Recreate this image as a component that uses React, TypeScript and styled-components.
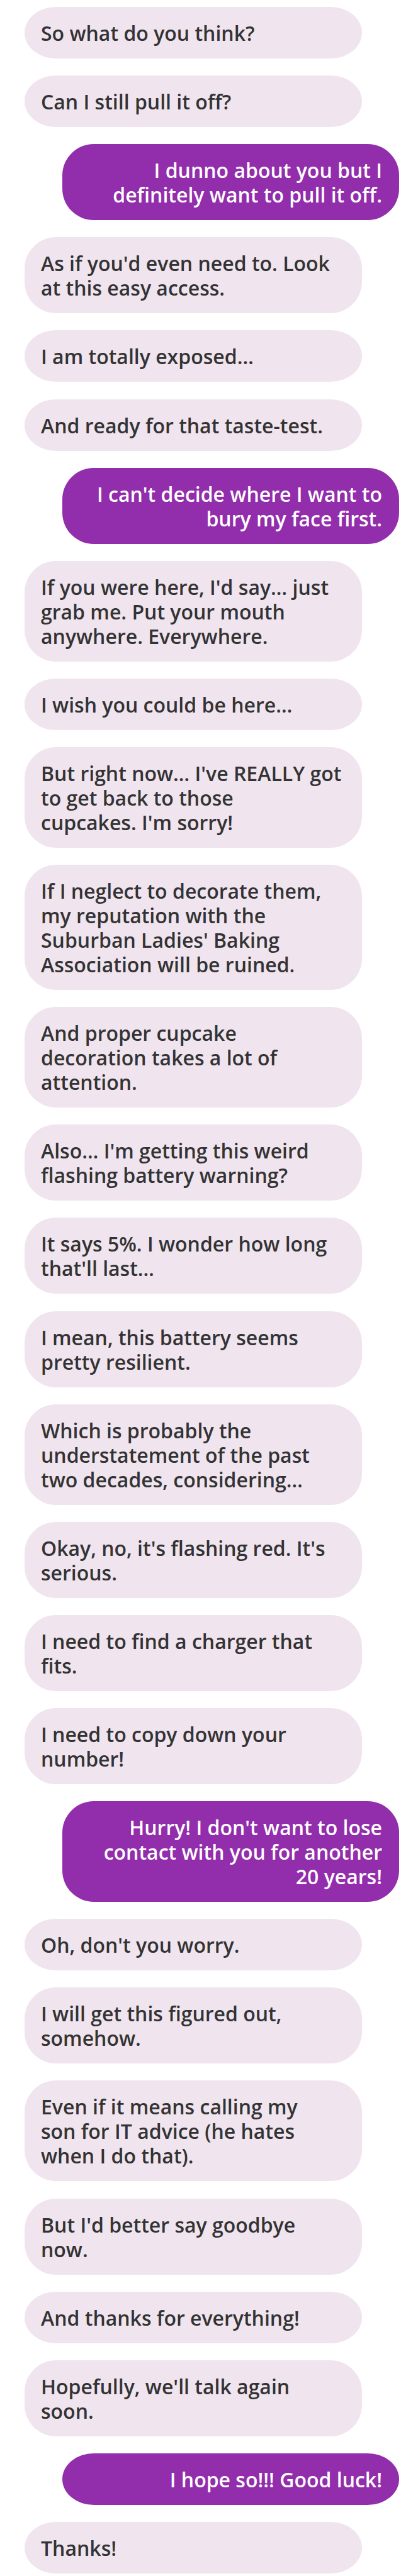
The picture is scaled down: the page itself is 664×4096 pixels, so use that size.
import React from "react";
import styled, { createGlobalStyle } from "styled-components";

type Sender = "them" | "me";

interface Message {
  from: Sender;
  lines: string[];
}

const messages: Message[] = [
  { from: "them", lines: ["So what do you think?"] },
  { from: "them", lines: ["Can I still pull it off?"] },
  { from: "me", lines: ["I dunno about you but I", "definitely want to pull it off."] },
  { from: "them", lines: ["As if you'd even need to. Look", "at this easy access."] },
  { from: "them", lines: ["I am totally exposed…"] },
  { from: "them", lines: ["And ready for that taste-test."] },
  { from: "me", lines: ["I can't decide where I want to", "bury my face first."] },
  { from: "them", lines: ["If you were here, I'd say… just", "grab me. Put your mouth", "anywhere. Everywhere."] },
  { from: "them", lines: ["I wish you could be here…"] },
  { from: "them", lines: ["But right now… I've REALLY got", "to get back to those", "cupcakes. I'm sorry!"] },
  {
    from: "them",
    lines: ["If I neglect to decorate them,", "my reputation with the", "Suburban Ladies' Baking", "Association will be ruined."],
  },
  { from: "them", lines: ["And proper cupcake", "decoration takes a lot of", "attention."] },
  { from: "them", lines: ["Also… I'm getting this weird", "flashing battery warning?"] },
  { from: "them", lines: ["It says 5%. I wonder how long", "that'll last…"] },
  { from: "them", lines: ["I mean, this battery seems", "pretty resilient."] },
  { from: "them", lines: ["Which is probably the", "understatement of the past", "two decades, considering…"] },
  { from: "them", lines: ["Okay, no, it's flashing red. It's", "serious."] },
  { from: "them", lines: ["I need to find a charger that", "fits."] },
  { from: "them", lines: ["I need to copy down your", "number!"] },
  { from: "me", lines: ["Hurry! I don't want to lose", "contact with you for another", "20 years!"] },
  { from: "them", lines: ["Oh, don't you worry."] },
  { from: "them", lines: ["I will get this figured out,", "somehow."] },
  { from: "them", lines: ["Even if it means calling my", "son for IT advice (he hates", "when I do that)."] },
  { from: "them", lines: ["But I'd better say goodbye", "now."] },
  { from: "them", lines: ["And thanks for everything!"] },
  { from: "them", lines: ["Hopefully, we'll talk again", "soon."] },
  { from: "me", lines: ["I hope so!!! Good luck!"] },
  { from: "them", lines: ["Thanks!"] },
];

const GlobalStyle = createGlobalStyle`
  * {
    box-sizing: border-box;
  }
  body {
    margin: 0;
    background: #ffffff;
  }
`;

const Thread = styled.ol`
  display: flex;
  flex-direction: column;
  justify-content: space-between;
  gap: 27px;
  min-height: 100vh;
  margin: 0;
  padding: 11px 30px 4px 39px;
  list-style: none;
  font-family: "Open Sans", "Liberation Sans", sans-serif;
  font-size: 32px;
  font-weight: 600;
  line-height: 39px;
`;

const Bubble = styled.li<{ $from: Sender }>`
  align-self: ${({ $from }) => ($from === "me" ? "flex-end" : "flex-start")};
  width: 90%;
  padding: 22px 27px 21px 26px;
  border-radius: 50px / min(50px, 50%);
  background: ${({ $from }) => ($from === "me" ? "#922dac" : "#f0e4ef")};
  color: ${({ $from }) => ($from === "me" ? "#ffffff" : "#333333")};
  text-align: ${({ $from }) => ($from === "me" ? "right" : "left")};
`;

const Line = styled.span`
  display: block;
  white-space: nowrap;
`;

export default function App() {
  return (
    <>
      <GlobalStyle />
      <Thread>
        {messages.map((message, index) => (
          <Bubble key={index} $from={message.from}>
            {message.lines.map((line) => (
              <Line key={line}>{line}</Line>
            ))}
          </Bubble>
        ))}
      </Thread>
    </>
  );
}
